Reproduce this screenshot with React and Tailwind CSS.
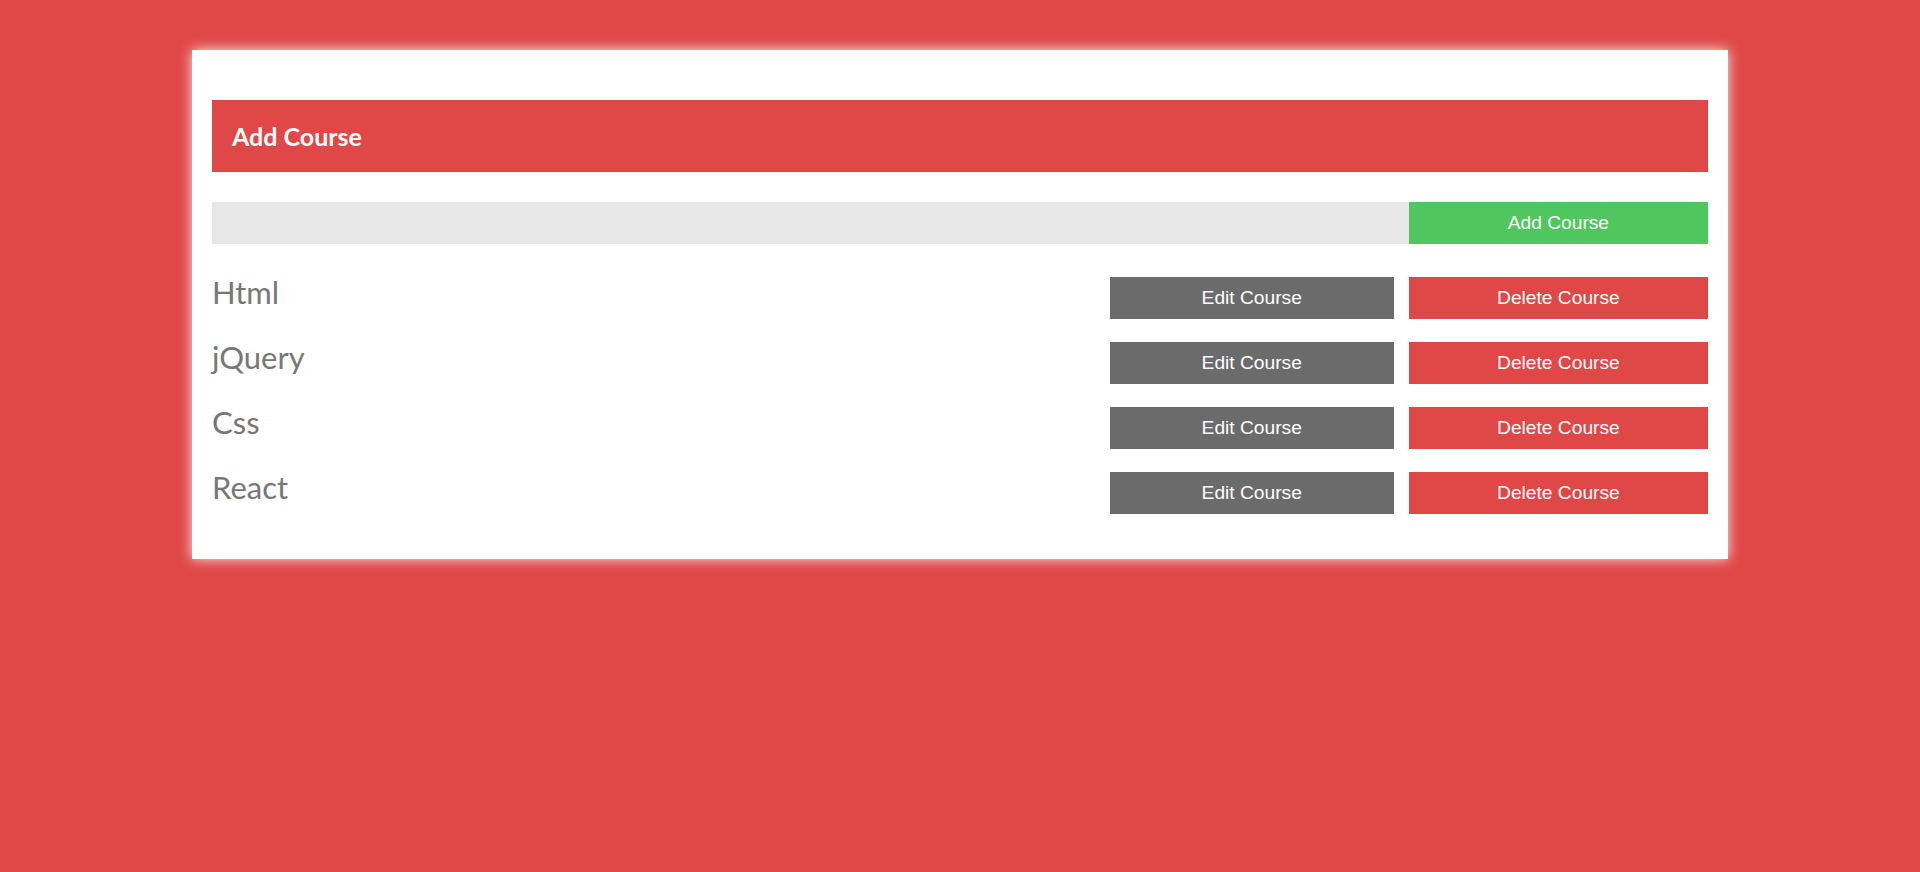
export default function App() {
  const courses = ["Html", "jQuery", "Css", "React"];
  return (
    <div className="min-h-screen bg-[#e04747] pt-[50px] font-['Lato',sans-serif]">
      <div className="mx-auto w-[80%] bg-white px-5 pt-[50px] pb-[45px] shadow-[0_0_12px_rgba(255,255,255,0.9)]">
        <div className="flex h-[72px] items-center bg-[#e04747] pl-5 pt-[2px] text-[25px] font-bold text-white">
          Add Course
        </div>
        <div className="mt-[30px] flex h-[42px]">
          <input className="h-full w-[80%] bg-[#e7e7e7] outline-none" />
          <button className="h-full w-[20%] bg-[#4fc65e] font-['Liberation_Sans',Arial,sans-serif] text-[19.2px] text-white">
            Add Course
          </button>
        </div>
        <div className="mt-[33px] flex flex-col gap-[23px]">
          {courses.map((c) => (
            <div key={c} className="flex h-[42px] items-start">
              <div className="flex-1 text-[31px] leading-[30px] text-[#777777]">{c}</div>
              <button className="mr-[1%] h-[42px] w-[19%] bg-[#6b6b6b] font-['Liberation_Sans',Arial,sans-serif] text-[19.2px] text-white">
                Edit Course
              </button>
              <button className="h-[42px] w-[20%] bg-[#e04747] font-['Liberation_Sans',Arial,sans-serif] text-[19.2px] text-white">
                Delete Course
              </button>
            </div>
          ))}
        </div>
      </div>
    </div>
  );
}
